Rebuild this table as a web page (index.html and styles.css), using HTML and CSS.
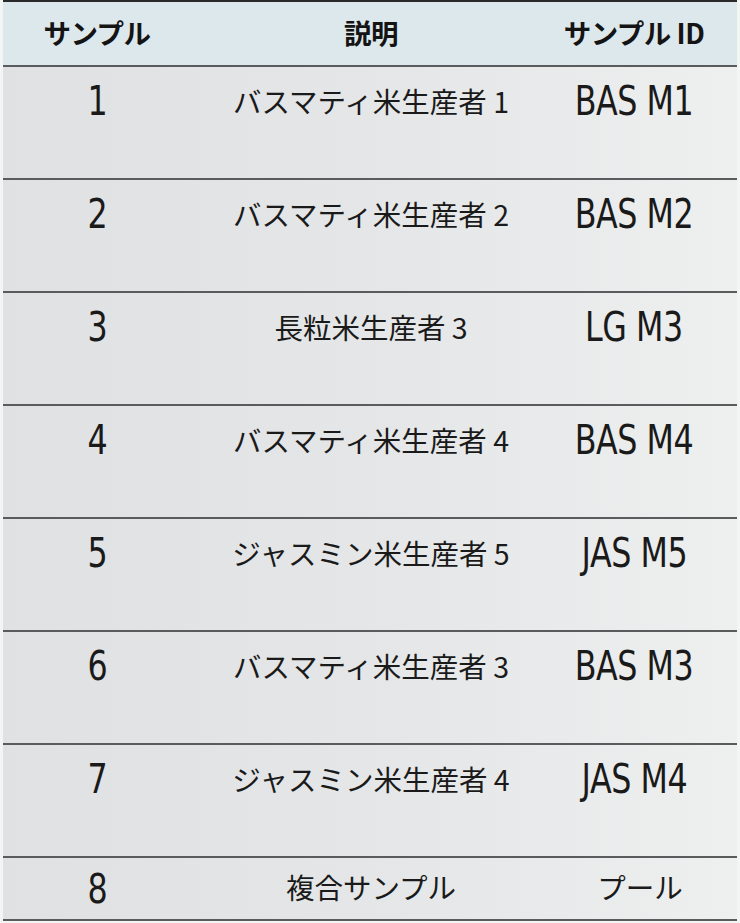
FILE: index.html
```html
<!DOCTYPE html>
<html lang="ja">
<head>
<meta charset="utf-8">
<title>サンプル</title>
<link rel="stylesheet" href="styles.css">
</head>
<body>
<div class="page">
  <div class="table">
    <div class="row head">
      <div class="cell c1">サンプル</div>
      <div class="cell c2">説明</div>
      <div class="cell c3">サンプル ID</div>
    </div>
    <div class="row">
      <div class="cell c1 num"><span>1</span></div>
      <div class="cell c2 desc">バスマティ米生産者 1</div>
      <div class="cell c3 num"><span>BAS M1</span></div>
    </div>
    <div class="row">
      <div class="cell c1 num"><span>2</span></div>
      <div class="cell c2 desc">バスマティ米生産者 2</div>
      <div class="cell c3 num"><span>BAS M2</span></div>
    </div>
    <div class="row">
      <div class="cell c1 num"><span>3</span></div>
      <div class="cell c2 desc">長粒米生産者 3</div>
      <div class="cell c3 num"><span>LG M3</span></div>
    </div>
    <div class="row">
      <div class="cell c1 num"><span>4</span></div>
      <div class="cell c2 desc">バスマティ米生産者 4</div>
      <div class="cell c3 num"><span>BAS M4</span></div>
    </div>
    <div class="row">
      <div class="cell c1 num"><span>5</span></div>
      <div class="cell c2 desc">ジャスミン米生産者 5</div>
      <div class="cell c3 num"><span>JAS M5</span></div>
    </div>
    <div class="row">
      <div class="cell c1 num"><span>6</span></div>
      <div class="cell c2 desc">バスマティ米生産者 3</div>
      <div class="cell c3 num"><span>BAS M3</span></div>
    </div>
    <div class="row">
      <div class="cell c1 num"><span>7</span></div>
      <div class="cell c2 desc">ジャスミン米生産者 4</div>
      <div class="cell c3 num"><span>JAS M4</span></div>
    </div>
    <div class="row last">
      <div class="cell c1 num"><span>8</span></div>
      <div class="cell c2 desc">複合サンプル</div>
      <div class="cell c3 desc pool">プール</div>
    </div>
  </div>
</div>
</body>
</html>
```
FILE: styles.css
```css
html, body {
  margin: 0;
  padding: 0;
  background: #f4f5f5;
}
.page {
  width: 740px;
  height: 923px;
  padding: 0 3px 0 3px;
  box-sizing: border-box;
  background: #f3f4f4;
}
.table {
  background: linear-gradient(90deg, #dfe1e2 0%, #e4e6e7 50%, #eeefef 100%);
  border-top: 2px solid #2a2a2a;
}
.row {
  display: grid;
  grid-template-columns: 188px 360px 186px;
  height: 113px;
  border-bottom: 2px solid #5a5b5c;
  box-sizing: border-box;
  color: #1a1a1a;
}
.row.head {
  height: 65px;
  background: #dde8ed;
  align-items: center;
}
.row.last {
  height: 63px;
}
.cell {
  text-align: center;
  white-space: nowrap;
}
.head .cell {
  font-family: "Noto Sans CJK JP", sans-serif;
  font-weight: 700;
  font-size: 27.5px;
  letter-spacing: -0.5px;
  color: #141414;
  line-height: 1;
  padding-bottom: 2px;
}
.num {
  font-family: "DejaVu Sans Condensed", "DejaVu Sans", sans-serif;
  font-stretch: condensed;
  font-size: 41px;
  line-height: 1;
  padding-top: 14px;
  letter-spacing: -0.5px;
}
.num span {
  display: inline-block;
  transform: scaleX(0.86);
}
.desc {
  font-family: "Noto Sans CJK JP", sans-serif;
  font-weight: 400;
  font-size: 28.5px;
  line-height: 1;
  padding-top: 20px;
}
.c3 {
  padding-right: 20px;
}
.c3.pool {
  padding-right: 8px;
}
.last .num {
  padding-top: 11px;
}
.last .desc {
  padding-top: 15px;
}
```
